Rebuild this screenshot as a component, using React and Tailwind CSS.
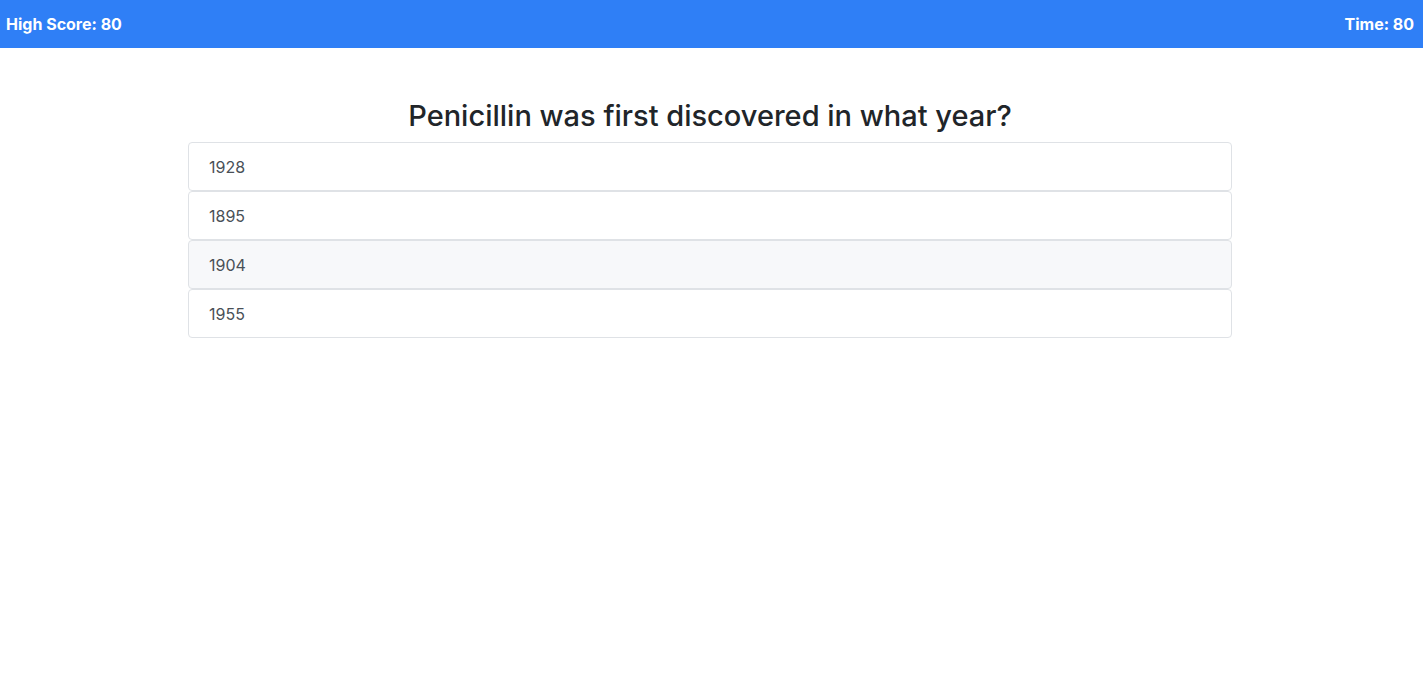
import React from 'react';

const answers = ['1928', '1895', '1904', '1955'];

const App = () => {
  const hovered = 2;

  return (
    <div className="min-h-screen bg-white font-['Inter',sans-serif]">
      <header className="flex h-12 items-center justify-between bg-[#2f7ff6] px-[6px] text-white">
        <span className="text-[16px] font-bold">High Score: 80</span>
        <span className="pr-[3px] text-[16px] font-bold">Time: 80</span>
      </header>

      <main className="mx-auto mt-[48px] w-[1047px] pr-[3px]">
        <h1 className="text-center text-[29px] font-medium leading-[40px] text-[#212529]">
          Penicillin was first discovered in what year?
        </h1>
        <div className="mt-[6px] flex flex-col">
          {answers.map((a, i) => (
            <button
              key={a}
              className={`flex h-[49px] items-center rounded border border-[#dfe2e6] px-5 text-left text-base text-[#495057] ${
                i === hovered ? 'bg-[#f7f8fa]' : 'bg-white'
              }`}
            >
              {a}
            </button>
          ))}
        </div>
      </main>
    </div>
  );
};

export default App;
